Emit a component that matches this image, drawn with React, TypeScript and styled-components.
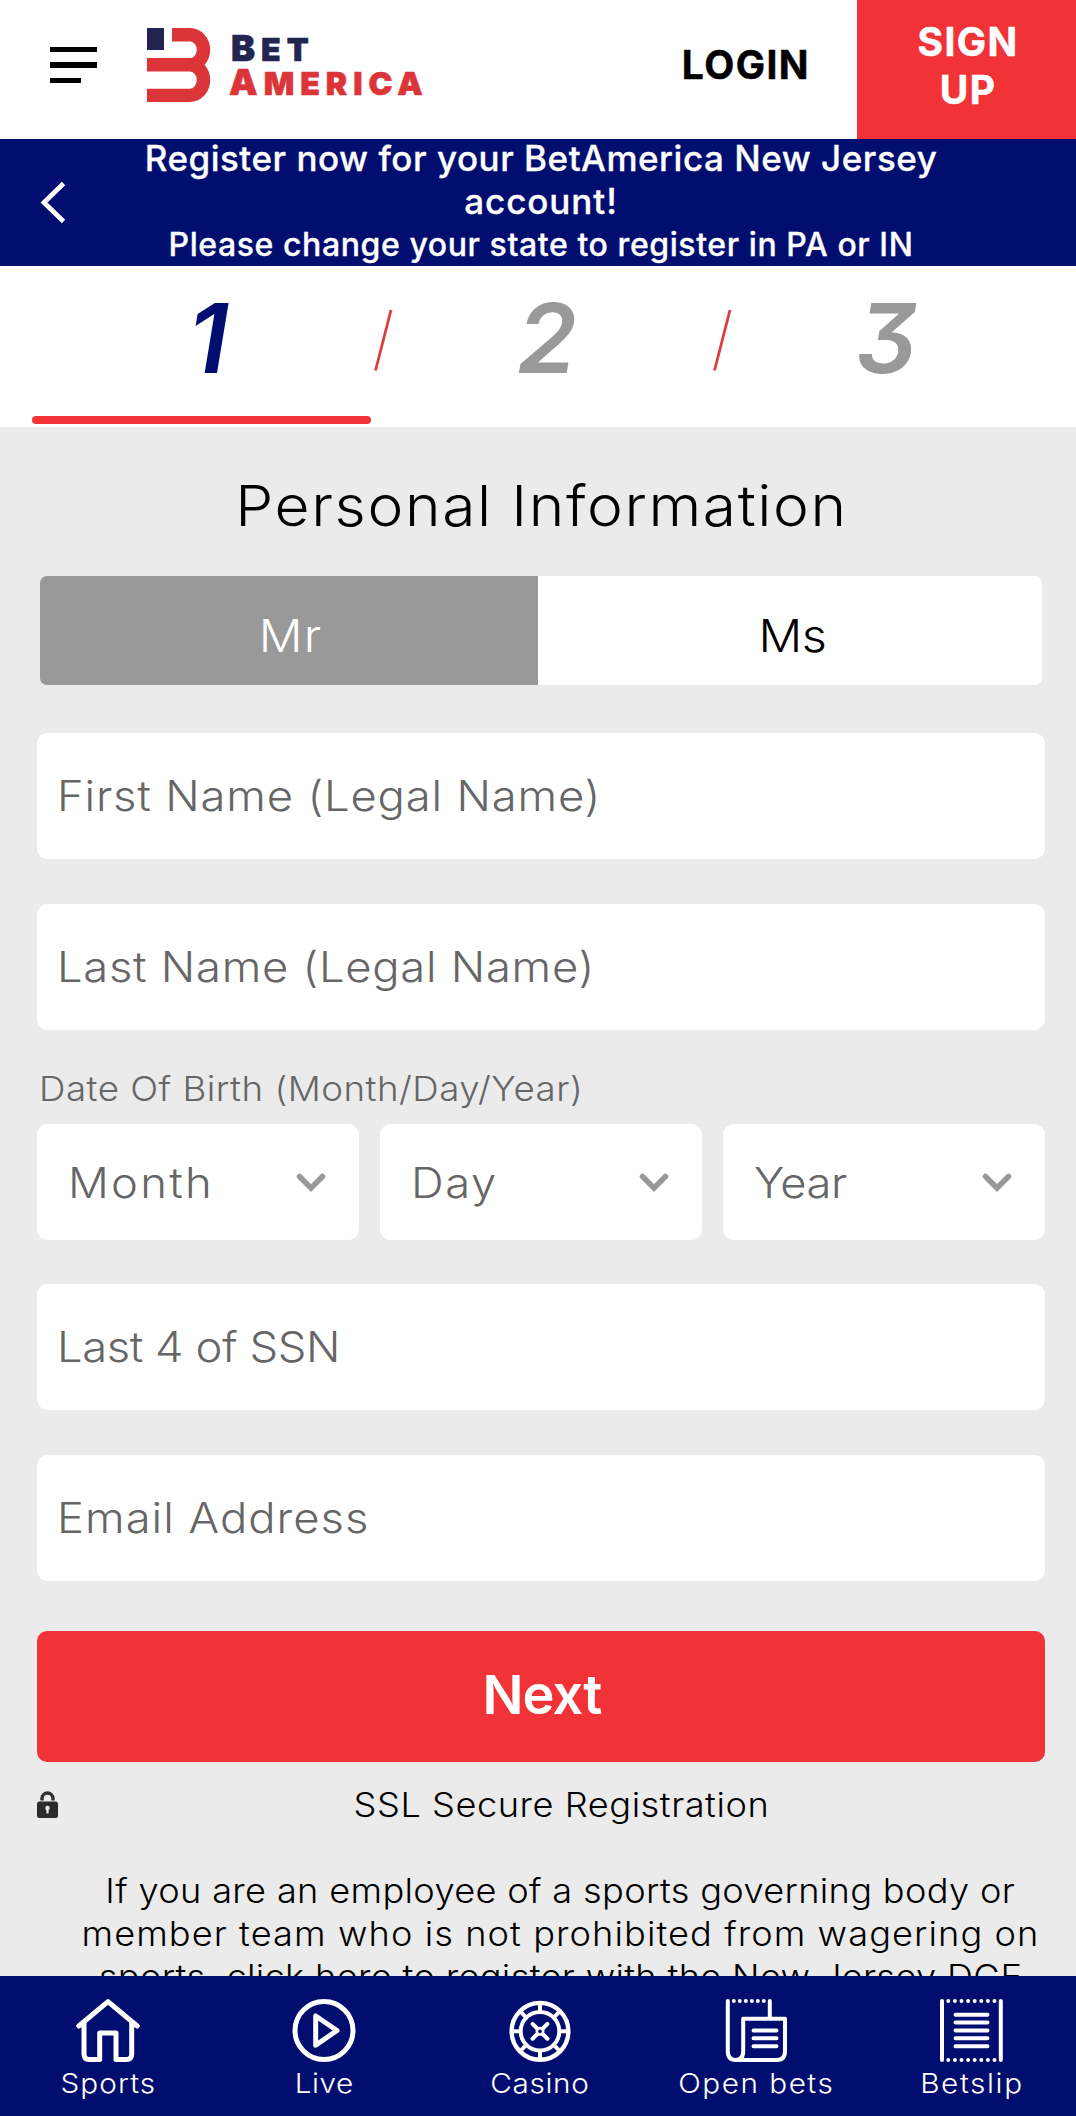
import React from "react";
import styled, { createGlobalStyle } from "styled-components";

const navy = "#010e6f";
const red = "#f13237";
const logoRed = "#db353a";

const Global = createGlobalStyle`
  *, *::before, *::after { box-sizing: border-box; }
  body { margin: 0; font-family: Inter, "Open Sans", sans-serif; background: #ebebeb; }
  button { font: inherit; border: 0; padding: 0; margin: 0; background: none; }
`;

const Page = styled.div`
  width: 1076px;
  height: 2116px;
  display: flex;
  flex-direction: column;
  overflow: hidden;
  color: #000;
`;

/* Extended light face used for all body copy */
const Wide = styled.span<{ $ls?: number; $from?: "left" | "center" }>`
  display: inline-block;
  white-space: nowrap;
  letter-spacing: ${(p) => p.$ls ?? 0}px;
  transform: scaleX(1.08);
  transform-origin: ${(p) => p.$from ?? "center"};
`;

/* header */
const Header = styled.header`
  display: flex;
  align-items: stretch;
  height: 139px;
  flex: none;
  background: #fff;
`;

const HeaderMain = styled.div`
  flex: 1;
  display: flex;
  align-items: center;
  padding: 0 47px 9px 50px;
`;

const Hamburger = styled.button`
  width: 47px;
  display: flex;
  flex-direction: column;
  align-items: flex-start;
  gap: 10.5px;
`;

const Bar = styled.span<{ $w: number }>`
  width: ${(p) => p.$w}px;
  height: 5.3px;
  background: #000;
`;

const Brand = styled.div`
  display: flex;
  align-items: center;
  margin-left: 50px;
  gap: 18px;
`;

const Wordmark = styled.div`
  display: flex;
  flex-direction: column;
  padding-top: 4px;
  font-weight: 900;
  font-size: 32px;
  line-height: 34px;
  letter-spacing: 6px;
`;

const BrandLine = styled.div<{ $color: string; $indent: number }>`
  color: ${(p) => p.$color};
  padding-left: ${(p) => p.$indent}px;
  -webkit-text-stroke: 0.6px ${(p) => p.$color};
  &::first-letter { font-size: 36px; line-height: 0; }
`;

const Login = styled.button`
  margin-left: auto;
  color: #000;
  font-weight: 700;
  font-size: 39px;
  line-height: 48px;
  letter-spacing: 1.45px;
  -webkit-text-stroke: 0.5px #000;
`;

const SignUp = styled.button`
  width: 219px;
  padding: 0 0 8px 3px;
  background: ${red};
  color: #fff;
  font-weight: 700;
  font-size: 39px;
  line-height: 48px;
  letter-spacing: 1.4px;
  -webkit-text-stroke: 0.5px #fff;
  display: flex;
  flex-direction: column;
  align-items: center;
  justify-content: center;
`;

/* registration banner */
const Banner = styled.section`
  height: 127px;
  flex: none;
  display: flex;
  align-items: center;
  background: ${navy};
  color: #fff;
  padding-left: 40px;
`;

const BannerText = styled.div`
  flex: 1;
  display: flex;
  flex-direction: column;
  align-items: center;
  margin-top: -2px;
  padding-right: 60px;
  font-weight: 500;
  line-height: 43px;
`;

const BannerLine = styled.span<{ $size: number; $ls: number }>`
  font-size: ${(p) => p.$size}px;
  letter-spacing: ${(p) => p.$ls}px;
  -webkit-text-stroke: 0.3px #fff;
  white-space: nowrap;
`;

/* steps */
const Steps = styled.nav`
  height: 161px;
  flex: none;
  display: flex;
  background: #fff;
  padding-left: 32px;
`;

const Step = styled.div<{ $active?: boolean }>`
  width: 339px;
  display: flex;
  flex-direction: column;
  align-items: center;
  color: ${(p) => (p.$active ? navy : "#999")};
  &::after {
    content: "";
    width: 100%;
    height: 8px;
    margin-top: 5px;
    border-radius: 4px;
    background: ${(p) => (p.$active ? red : "transparent")};
  }
`;

const StepNumber = styled.span`
  font-size: 96px;
  line-height: 145px;
  font-weight: 600;
  font-style: italic;
  font-feature-settings: "cv09";
  padding-left: 13px;
`;

const Slash = styled.svg`
  flex: none;
  width: 20px;
  height: 64px;
  margin: 42px -22px 0 2px;
`;

/* form */
const Main = styled.main`
  flex: 1;
  min-height: 0;
  overflow: hidden;
  background: #ebebeb;
  padding: 44px 31px 0 37px;
  font-weight: 300;
`;

const Title = styled.h1`
  margin: 0;
  padding-left: 2px;
  text-align: center;
  font-weight: 300;
  font-size: 56px;
  line-height: 70px;
`;

const Toggle = styled.div`
  display: flex;
  height: 109px;
  margin: 35px 3px 48px;
  border-radius: 7px;
  overflow: hidden;
`;

const ToggleOption = styled.button<{ $active?: boolean; $w: number }>`
  width: ${(p) => p.$w}px;
  padding: 10px 0 0 4px;
  font-size: 45px;
  font-weight: 300;
  color: ${(p) => (p.$active ? "#fff" : "#000")};
  background: ${(p) => (p.$active ? "#999" : "#fff")};
`;

const Field = styled.div<{ $gap: number }>`
  display: flex;
  align-items: center;
  height: 126px;
  margin-bottom: ${(p) => p.$gap}px;
  padding: 0 20px 1px;
  background: #fff;
  border-radius: 11px;
  font-size: 42px;
  color: #666;
`;

const Label = styled.div`
  padding-left: 2px;
  margin-bottom: 13px;
  font-size: 34px;
  line-height: 44px;
  color: #666;
`;

const Selects = styled.div`
  display: grid;
  grid-template-columns: repeat(3, 1fr);
  gap: 21px;
  margin-bottom: 44px;
`;

const Select = styled.button`
  display: flex;
  align-items: center;
  justify-content: space-between;
  height: 116px;
  padding: 0 33px 0 31px;
  background: #fff;
  border-radius: 11px;
  font-size: 42px;
  font-weight: 300;
  color: #666;
`;

const Next = styled.button`
  width: 100%;
  height: 131px;
  padding: 0 0 4px 2px;
  background: ${red};
  border-radius: 10px;
  color: #fff;
  font-size: 54px;
  font-weight: 600;
  letter-spacing: -0.8px;
`;

const Secure = styled.div`
  display: flex;
  align-items: center;
  margin-top: 21px;
  height: 43px;
  font-size: 33.5px;
`;

const SecureText = styled.span`
  flex: 1;
  padding: 1px 0 0 19px;
  text-align: center;
`;

const Notice = styled.p`
  margin: 44px 0 0;
  padding-left: 39px;
  display: flex;
  flex-direction: column;
  align-items: center;
  font-size: 33.5px;
  line-height: 43px;
`;

/* bottom navigation */
const TabBar = styled.nav`
  height: 140px;
  flex: none;
  display: grid;
  grid-template-columns: repeat(5, 216px);
  background: ${navy};
  color: #fff;
`;

const Tab = styled.a`
  display: flex;
  flex-direction: column;
  align-items: center;
  gap: 3px;
  padding-top: 23px;
  font-size: 27.5px;
  line-height: 34px;
  font-weight: 300;
`;

const TabSvg = styled.svg`
  width: 64px;
  height: 64px;
  fill: none;
  stroke: #fff;
  stroke-linecap: round;
  stroke-linejoin: round;
`;

const HomeIcon = () => (
  <TabSvg viewBox="0 0 64 64" strokeWidth="5">
    <path d="M2.8 27 32 2.6 61.2 27" />
    <path d="M8 24V55Q8 60.4 13 60.4H23.7V34H40V60.4H50.5Q55.7 60.4 55.7 55V24" />
  </TabSvg>
);

const LiveIcon = () => (
  <TabSvg viewBox="0 0 64 64" strokeWidth="5">
    <circle cx="32" cy="31.5" r="29" />
    <path d="M23.7 17V46.2L45 31.5Z" />
  </TabSvg>
);

const CasinoIcon = () => (
  <TabSvg viewBox="0 0 64 64" strokeWidth="4">
    <circle cx="32" cy="32.3" r="28.4" strokeWidth="4.4" />
    <circle cx="32" cy="32.3" r="19.3" />
    {[0, 45, 90, 135, 180, 225, 270, 315].map((a) => (
      <path key={a} d="M20 0H27" strokeLinecap="butt" transform={`translate(32 32.3) rotate(${a})`} />
    ))}
    {[45, 135, 225, 315].map((a) => (
      <path key={a} d="M4 0H10.5" transform={`translate(32 32.3) rotate(${a})`} />
    ))}
    <circle cx="32" cy="32.3" r="3.2" strokeWidth="2.6" />
  </TabSvg>
);

const OpenBetsIcon = () => (
  <TabSvg viewBox="0 0 64 64" strokeWidth="4">
    <path d="M45.8 2V18M3.8 2V52Q3.8 61 11.5 61Q19.2 61 19.2 52V19.7H61V52Q61 61 53 61H11.5" />
    <path d="M29.5 31.5H52.5M29.5 39.3H52.5M29.5 47.3H52.5" />
    <path d="M9.8 2H41" strokeDasharray="0 6" />
  </TabSvg>
);

const BetslipIcon = () => (
  <TabSvg viewBox="0 0 64 64" strokeWidth="4">
    <path d="M2 2V61M60.8 2V61" />
    <path d="M15.5 15.8H47.5M15.5 23.6H47.5M15.5 31.5H47.5M15.5 39.3H47.5M15.5 47.2H47.5" />
    <path d="M8.3 2H55M8.3 61H55" strokeDasharray="0 6.6" />
  </TabSvg>
);

const BrandMark = () => (
  <svg width="64" height="75" viewBox="0 0 64 75">
    <path d="M0 0H17V22H0Z" fill="#22254f" />
    <path
      d="M25 6.8H43A13.5 15 0 0 1 43 36.8H0M43 36.8A13.5 15.3 0 0 1 43 67.4H0"
      fill="none"
      stroke={logoRed}
      strokeWidth="13.4"
    />
  </svg>
);

const Chevron = () => (
  <svg width="30" height="20" viewBox="0 0 30 20">
    <path d="M3.5 4.5 15 16 26.5 4.5" fill="none" stroke="#999" strokeWidth="5.5" strokeLinecap="round" />
  </svg>
);

const BackIcon = () => (
  <svg width="26" height="44" viewBox="0 0 26 44">
    <path d="M23.5 2.5 4 21.5 23.5 40.5" fill="none" stroke="#fff" strokeWidth="4.8" />
  </svg>
);

const LockIcon = () => (
  <svg width="21" height="27" viewBox="0 0 21 27">
    <path d="M5 9.5V7.5A5.5 5.5 0 0 1 16 7.5V9.5" fill="none" stroke="#303030" strokeWidth="3.4" />
    <rect x="0" y="10.5" width="21" height="16.5" rx="2.5" fill="#2b2b2b" />
    <circle cx="10.5" cy="17" r="2.2" fill="#ebebeb" />
    <path d="M9.4 17H11.6V22.5H9.4Z" fill="#ebebeb" />
  </svg>
);

const Divider = () => (
  <Slash viewBox="0 0 20 64">
    <path d="M18 2 2.5 62.5" stroke="#da3d42" strokeWidth="2.8" />
  </Slash>
);

const selects = [
  { label: "Month", ls: 2.1 },
  { label: "Day", ls: 1.5 },
  { label: "Year", ls: -0.4 },
];

const notice = [
  { text: "If you are an employee of a sports governing body or", ls: 0.31 },
  { text: "member team who is not prohibited from wagering on", ls: 1 },
  { text: "sports, click here to register with the New Jersey DGE", ls: 0.31 },
];

const tabs = [
  { label: "Sports", ls: 1, Icon: HomeIcon },
  { label: "Live", ls: 0.5, Icon: LiveIcon },
  { label: "Casino", ls: 0.6, Icon: CasinoIcon },
  { label: "Open bets", ls: 1.4, Icon: OpenBetsIcon },
  { label: "Betslip", ls: 1.5, Icon: BetslipIcon },
];

export default function App() {
  return (
    <Page>
      <Global />
      <Header>
        <HeaderMain>
          <Hamburger aria-label="Menu">
            <Bar $w={47} />
            <Bar $w={47} />
            <Bar $w={31} />
          </Hamburger>
          <Brand>
            <BrandMark />
            <Wordmark>
              <BrandLine $color="#22254f" $indent={2}>BET</BrandLine>
              <BrandLine $color={logoRed} $indent={0}>AMERICA</BrandLine>
            </Wordmark>
          </Brand>
          <Login>LOGIN</Login>
        </HeaderMain>
        <SignUp>
          <span>SIGN</span>
          <span>UP</span>
        </SignUp>
      </Header>

      <Banner>
        <BackIcon />
        <BannerText>
          <BannerLine $size={35} $ls={0.52}>Register now for your BetAmerica New Jersey</BannerLine>
          <BannerLine $size={35} $ls={0.94}>account!</BannerLine>
          <BannerLine $size={32} $ls={0.58}>Please change your state to register in PA or IN</BannerLine>
        </BannerText>
      </Banner>

      <Steps>
        <Step $active><StepNumber>1</StepNumber></Step>
        <Divider />
        <Step><StepNumber>2</StepNumber></Step>
        <Divider />
        <Step><StepNumber>3</StepNumber></Step>
      </Steps>

      <Main>
        <Title><Wide $ls={1.5}>Personal Information</Wide></Title>
        <Toggle>
          <ToggleOption $active $w={498}><Wide $ls={1.2}>Mr</Wide></ToggleOption>
          <ToggleOption $w={504}><Wide $ls={-0.5}>Ms</Wide></ToggleOption>
        </Toggle>
        <Field $gap={45}><Wide $from="left" $ls={0.77}>First Name (Legal Name)</Wide></Field>
        <Field $gap={37}><Wide $from="left" $ls={0.67}>Last Name (Legal Name)</Wide></Field>
        <Label><Wide $from="left" $ls={0.44}>Date Of Birth (Month/Day/Year)</Wide></Label>
        <Selects>
          {selects.map((s) => (
            <Select key={s.label}>
              <Wide $from="left" $ls={s.ls}>{s.label}</Wide>
              <Chevron />
            </Select>
          ))}
        </Selects>
        <Field $gap={45}><Wide $from="left" $ls={-0.4}>Last 4 of SSN</Wide></Field>
        <Field $gap={50}><Wide $from="left" $ls={0.95}>Email Address</Wide></Field>
        <Next>Next</Next>
        <Secure>
          <LockIcon />
          <SecureText><Wide $ls={0.5}>SSL Secure Registration</Wide></SecureText>
        </Secure>
        <Notice>
          {notice.map((l) => (
            <Wide key={l.text} $ls={l.ls}>{l.text}</Wide>
          ))}
        </Notice>
      </Main>

      <TabBar>
        {tabs.map(({ label, ls, Icon }) => (
          <Tab key={label}>
            <Icon />
            <Wide $ls={ls}>{label}</Wide>
          </Tab>
        ))}
      </TabBar>
    </Page>
  );
}
